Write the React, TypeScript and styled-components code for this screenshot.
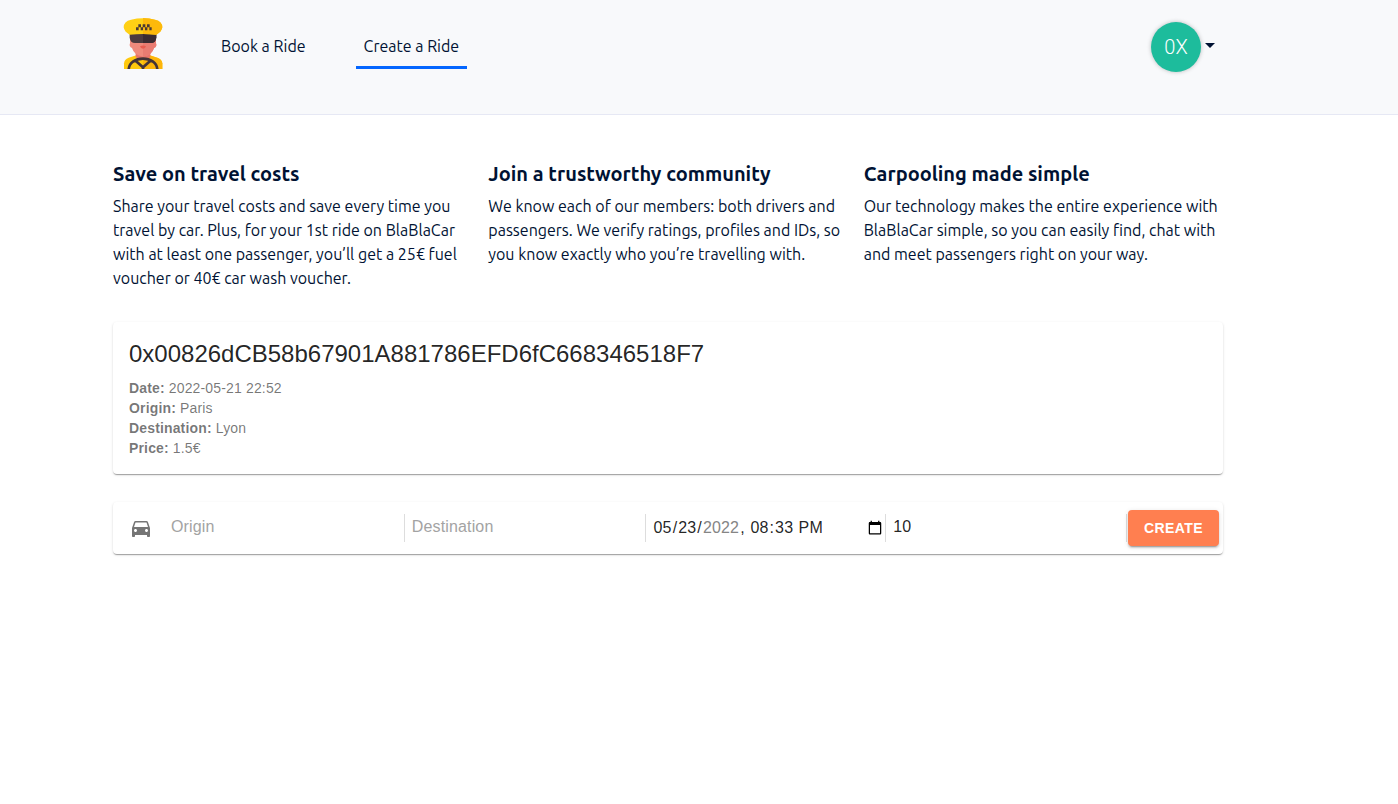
import React from "react";
import styled, { createGlobalStyle } from "styled-components";

const Global = createGlobalStyle`
  *, *::before, *::after { box-sizing: border-box; }
  body {
    margin: 0;
    background: #fff;
    color: #001233;
    font: 16px/24px Ubuntu, "Noto Sans", sans-serif;
  }
`;

const Header = styled.header`
  display: flex;
  align-items: flex-start;
  height: 115px;
  padding: 18px 183px 0 123px;
  background: #f8f9fb;
  border-bottom: 1px solid #e6e8f4;
`;

const HomeLink = styled.a`
  display: block;
  width: 40px;
  height: 51px;
  margin-right: 50px;
`;

const Nav = styled.nav`
  display: flex;
  flex: 1;
  gap: 42px;
  padding-top: 16px;
`;

const NavLink = styled.a<{ $active?: boolean }>`
  padding: 0 8px 8px;
  border-bottom: 3px solid ${(p) => (p.$active ? "#0466ff" : "transparent")};
  color: inherit;
  text-decoration: none;
  white-space: nowrap;
`;

const AccountButton = styled.button`
  display: flex;
  align-items: center;
  gap: 4px;
  margin-top: 4px;
  padding: 0;
  border: 0;
  background: none;
  color: #001233;
  cursor: pointer;
`;

const Avatar = styled.span`
  width: 50px;
  height: 50px;
  border-radius: 50%;
  background: #1dbc9c;
  box-shadow: 0 0 4px rgba(0, 0, 0, 0.25);
  color: #fff;
  font: 300 20px/50px Roboto, sans-serif;
  text-align: center;
`;

const Caret = styled.span`
  margin-bottom: 4px;
  border: 5px solid transparent;
  border-top-color: currentColor;
  border-bottom: 0;
`;

const Main = styled.main`
  padding: 47px 175px 32px 113px;
`;

const Benefits = styled.section`
  display: grid;
  grid-template-columns: repeat(3, 1fr);
  gap: 16px;
  margin-bottom: 32px;
`;

const BenefitTitle = styled.h2`
  margin: 0 0 8px;
  font-size: 20px;
  font-weight: 700;
  line-height: 24px;
`;

const BenefitText = styled.p`
  margin: 0;
`;

const Paper = styled.article`
  margin-bottom: 28px;
  padding: 16px;
  border-radius: 4px;
  background: #fff;
  box-shadow: 0 2px 1px -1px rgba(0, 0, 0, 0.2), 0 1px 1px rgba(0, 0, 0, 0.14),
    0 1px 3px rgba(0, 0, 0, 0.12);
  font-family: "Liberation Sans", Arial, sans-serif;
`;

const RideTitle = styled.h3`
  margin: 0 0 8px;
  color: rgba(0, 0, 0, 0.87);
  font-size: 24px;
  font-weight: 400;
  line-height: 32px;
`;

const RideLine = styled.div`
  color: rgba(0, 0, 0, 0.54);
  font-size: 14px;
  line-height: 20px;
  letter-spacing: 0.01071em;
`;

const RideForm = styled(Paper).attrs({ as: "form" })`
  display: flex;
  align-items: center;
  height: 52px;
  padding: 0 4px 0 16px;
`;

const CarIcon = styled.svg`
  flex: none;
  width: 24px;
  height: 24px;
  margin-right: 11px;
  fill: rgba(0, 0, 0, 0.54);
`;

const Field = styled.input`
  flex: 1 1 0;
  min-width: 0;
  height: 28px;
  padding: 0 0 3px 7px;
  border: 0;
  border-right: 1px solid #ddd;
  outline: 0;
  background: none;
  color: rgba(0, 0, 0, 0.87);
  font: 16px "Liberation Sans", Arial, sans-serif;
  letter-spacing: 0.00938em;

  &::placeholder {
    color: #a3a3a3;
    opacity: 1;
  }
  &::-webkit-inner-spin-button {
    display: none;
  }
  &::-webkit-datetime-edit-year-field {
    color: #858585;
  }
`;

const DateField = styled(Field)`
  padding-bottom: 1px;
`;

const SubmitButton = styled.button`
  height: 36px;
  margin-left: 1px;
  padding: 0 16px;
  border: 0;
  border-radius: 4px;
  background: #ff7f50;
  box-shadow: 0 3px 1px -2px rgba(0, 0, 0, 0.2), 0 2px 2px rgba(0, 0, 0, 0.14),
    0 1px 5px rgba(0, 0, 0, 0.12);
  color: #fff;
  font: 700 14px "Liberation Sans", Arial, sans-serif;
  letter-spacing: 0.02857em;
  text-transform: uppercase;
  cursor: pointer;
`;

const benefits = [
  {
    title: "Save on travel costs",
    text: "Share your travel costs and save every time you travel by car. Plus, for your 1st ride on BlaBlaCar with at least one passenger, you’ll get a 25€ fuel voucher or 40€ car wash voucher.",
  },
  {
    title: "Join a trustworthy community",
    text: "We know each of our members: both drivers and passengers. We verify ratings, profiles and IDs, so you know exactly who you’re travelling with.",
  },
  {
    title: "Carpooling made simple",
    text: "Our technology makes the entire experience with BlaBlaCar simple, so you can easily find, chat with and meet passengers right on your way.",
  },
];

const ride = [
  ["Date", "2022-05-21 22:52"],
  ["Origin", "Paris"],
  ["Destination", "Lyon"],
  ["Price", "1.5€"],
];

function DriverLogo() {
  return (
    <svg width="40" height="51" viewBox="40 30 120 153" aria-hidden="true">
      <path d="M43 183v-17q1-12 14-17l23-7h40l23 7q14 5 15 17v17z" fill="#ffc90e" />
      <path d="M100 142h20l23 7q14 5 15 17v17h-58z" fill="#fdb50a" />
      <path d="M78 124h44v22q-8 10-22 10t-22-10z" fill="#e8746a" />
      <path d="M61 84h78v22q4 10-6 14-6 22-33 26-27-4-33-26-10-4-6-14z" fill="#f08a7c" />
      <path d="M100 84h39v22q4 10-6 14-6 22-33 26z" fill="#ea7c72" />
      <path d="M91 115q9-5 18 0-2 7-9 7t-9-7z" fill="#e95c50" />
      <path d="M60 74h80v15q-2 16-16 16H76q-14 0-16-16z" fill="#4d3b3f" />
      <path d="M100 74h40v15q-2 16-16 16h-24z" fill="#3b2c32" />
      <path d="M42 58q0-18 22-23 36-8 72 0 22 5 22 23-2 14-18 22-40-4-80 0Q44 72 42 58z" fill="#ffd015" />
      <path d="M100 30q20 0 36 5 22 5 22 23-2 14-18 22-20-2-40-2z" fill="#fdb90b" />
      <path d="M86 49h8v9h-8zm13 0h8v9h-8zm13 0h8v9h-8zM79 58h8v9h-8zm14 0h7v9h-7zm13 0h7v9h-7zm13 0h7v9h-7z" fill="#4b3835" />
      <path d="M57 185c2-44 84-44 86 0M76 157l24 21 24-21M100 176v9" fill="none" stroke="#443337" strokeWidth="8" />
    </svg>
  );
}

export default function App() {
  return (
    <>
      <Global />
      <Header>
        <HomeLink href="#" aria-label="Home">
          <DriverLogo />
        </HomeLink>
        <Nav>
          <NavLink href="#book">Book a Ride</NavLink>
          <NavLink href="#create" $active aria-current="page">
            Create a Ride
          </NavLink>
        </Nav>
        <AccountButton type="button" aria-haspopup="menu">
          <Avatar>0X</Avatar>
          <Caret />
        </AccountButton>
      </Header>
      <Main>
        <Benefits>
          {benefits.map((b) => (
            <div key={b.title}>
              <BenefitTitle>{b.title}</BenefitTitle>
              <BenefitText>{b.text}</BenefitText>
            </div>
          ))}
        </Benefits>
        <Paper>
          <RideTitle>0x00826dCB58b67901A881786EFD6fC668346518F7</RideTitle>
          {ride.map(([label, value]) => (
            <RideLine key={label}>
              <b>{label}:</b> {value}
            </RideLine>
          ))}
        </Paper>
        <RideForm>
          <CarIcon viewBox="0 0 24 24" aria-hidden="true">
            <path d="M18.92 6.01C18.72 5.42 18.16 5 17.5 5h-11c-.66 0-1.21.42-1.42 1.01L3 12v8c0 .55.45 1 1 1h1c.55 0 1-.45 1-1v-1h12v1c0 .55.45 1 1 1h1c.55 0 1-.45 1-1v-8l-2.08-5.99zM6.5 16c-.83 0-1.5-.67-1.5-1.5S5.67 13 6.5 13s1.5.67 1.5 1.5S7.33 16 6.5 16zm11 0c-.83 0-1.5-.67-1.5-1.5s.67-1.5 1.5-1.5 1.5.67 1.5 1.5-.67 1.5-1.5 1.5zM5 11l1.5-4.5h11L19 11H5z" />
          </CarIcon>
          <Field aria-label="Origin" placeholder="Origin" />
          <Field aria-label="Destination" placeholder="Destination" />
          <DateField type="datetime-local" aria-label="Date" defaultValue="2022-05-23T20:33" />
          <Field type="number" aria-label="Price" defaultValue="10" />
          <SubmitButton type="button">Create</SubmitButton>
        </RideForm>
      </Main>
    </>
  );
}
